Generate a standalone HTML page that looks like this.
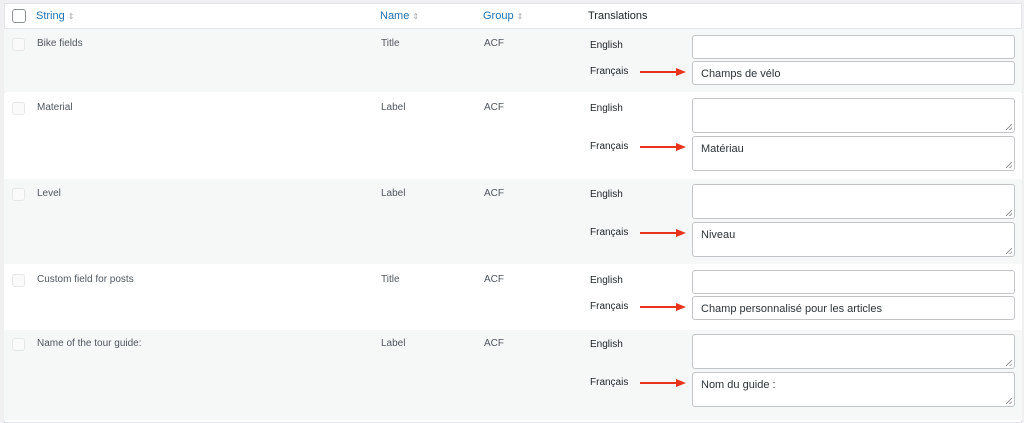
<!DOCTYPE html>
<html><head><meta charset="utf-8"><style>
*{box-sizing:border-box;margin:0;padding:0}
body{width:1024px;height:416px;overflow:hidden;background:#f0f0f1;font-family:"Liberation Sans",sans-serif;font-size:10px;color:#50575e;position:relative}
.t{position:absolute;left:4px;top:3px;width:1018px;height:420px;background:#fff;border:1px solid #e2e4e7}
.r{position:absolute;left:4px;width:1018px}
.g{background:#f6f7f7}
.a{position:absolute;white-space:nowrap}
.h{color:#2271b1;font-size:11px}
.cb{position:absolute;left:12px;width:13px;height:13px;border:1px solid #e6e7e8;border-radius:3px;background:#fafafa}
.in{position:absolute;left:692px;width:323px;border:1px solid #c3c4c7;border-radius:3px;background:#fff;font-size:11px;color:#2c3338;padding:6px 0 0 8px}
.ta::after{content:"";position:absolute;right:2px;bottom:2px;width:6px;height:6px;background:linear-gradient(135deg,transparent 45%,#999 45%,#999 55%,transparent 55%,transparent 75%,#999 75%,#999 85%,transparent 85%)}
.lb{position:absolute;left:590px;color:#1d2327;font-size:10px}
.ar{position:absolute;left:640px;width:46px;height:8px}
</style></head><body>
<div class="t"></div>
<div class="r" style="top:28px;height:1px;background:#e2e4e7"></div>
<div class="cb" style="top:9px;width:14px;height:14px;border-color:#8c8f94;background:#fff"></div>
<div class="a h" style="left:36px;top:10px">String <span style="color:#a7aaad;font-size:8px">⇕</span></div>
<div class="a h" style="left:380px;top:10px">Name <span style="color:#a7aaad;font-size:8px">⇕</span></div>
<div class="a h" style="left:483px;top:10px">Group <span style="color:#a7aaad;font-size:8px">⇕</span></div>
<div class="a" style="left:588px;top:10px;font-size:11px;color:#1d2327">Translations</div>

<div class="r g" style="top:29px;height:63px"></div>
<div class="r" style="top:93px;height:86px;background:#fff"></div>
<div class="r g" style="top:179px;height:85px"></div>
<div class="r" style="top:264px;height:66px;background:#fff"></div>
<div class="r g" style="top:330px;height:90px"></div>

<div class="cb" style="top:38px"></div>
<div class="a" style="left:37px;top:38px">Bike fields</div>
<div class="a" style="left:381px;top:38px">Title</div>
<div class="a" style="left:484px;top:38px">ACF</div>
<div class="lb" style="top:40px">English</div>
<div class="lb" style="top:66px">Français</div>
<div class="in" style="top:35px;height:24px"></div>
<div class="in" style="top:61px;height:24px">Champs de vélo</div>

<div class="cb" style="top:102px"></div>
<div class="a" style="left:37px;top:102px">Material</div>
<div class="a" style="left:381px;top:102px">Label</div>
<div class="a" style="left:484px;top:102px">ACF</div>
<div class="lb" style="top:103px">English</div>
<div class="lb" style="top:141px">Français</div>
<div class="in ta" style="top:98px;height:35px"></div>
<div class="in ta" style="top:136px;height:35px">Matériau</div>

<div class="cb" style="top:188px"></div>
<div class="a" style="left:37px;top:188px">Level</div>
<div class="a" style="left:381px;top:188px">Label</div>
<div class="a" style="left:484px;top:188px">ACF</div>
<div class="lb" style="top:189px">English</div>
<div class="lb" style="top:227px">Français</div>
<div class="in ta" style="top:184px;height:35px"></div>
<div class="in ta" style="top:222px;height:35px">Niveau</div>

<div class="cb" style="top:274px"></div>
<div class="a" style="left:37px;top:274px">Custom field for posts</div>
<div class="a" style="left:381px;top:274px">Title</div>
<div class="a" style="left:484px;top:274px">ACF</div>
<div class="lb" style="top:275px">English</div>
<div class="lb" style="top:301px">Français</div>
<div class="in" style="top:270px;height:24px"></div>
<div class="in" style="top:296px;height:24px">Champ personnalisé pour les articles</div>

<div class="cb" style="top:338px"></div>
<div class="a" style="left:37px;top:338px">Name of the tour guide:</div>
<div class="a" style="left:381px;top:338px">Label</div>
<div class="a" style="left:484px;top:338px">ACF</div>
<div class="lb" style="top:339px">English</div>
<div class="lb" style="top:377px">Français</div>
<div class="in ta" style="top:334px;height:35px"></div>
<div class="in ta" style="top:372px;height:35px">Nom du guide :</div>

<svg class="ar" style="top:68px" viewBox="0 0 46 8"><path d="M0 4H38" stroke="#e8341c" stroke-width="2"/><path d="M36 0L46 4L36 8Z" fill="#e8341c"/></svg>
<svg class="ar" style="top:143px" viewBox="0 0 46 8"><path d="M0 4H38" stroke="#e8341c" stroke-width="2"/><path d="M36 0L46 4L36 8Z" fill="#e8341c"/></svg>
<svg class="ar" style="top:229px" viewBox="0 0 46 8"><path d="M0 4H38" stroke="#e8341c" stroke-width="2"/><path d="M36 0L46 4L36 8Z" fill="#e8341c"/></svg>
<svg class="ar" style="top:303px" viewBox="0 0 46 8"><path d="M0 4H38" stroke="#e8341c" stroke-width="2"/><path d="M36 0L46 4L36 8Z" fill="#e8341c"/></svg>
<svg class="ar" style="top:379px" viewBox="0 0 46 8"><path d="M0 4H38" stroke="#e8341c" stroke-width="2"/><path d="M36 0L46 4L36 8Z" fill="#e8341c"/></svg>
</body></html>
